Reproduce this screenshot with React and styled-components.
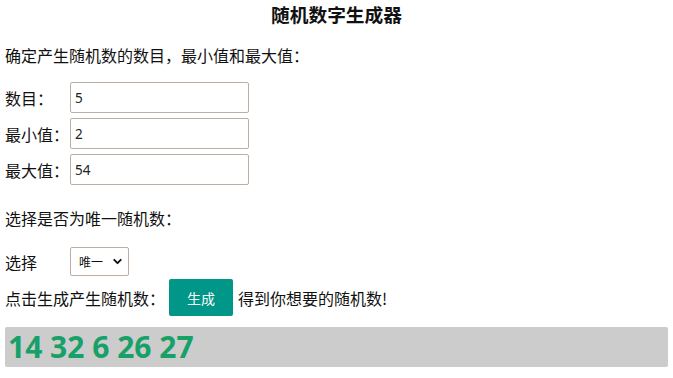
import React from "react";
import styled, { createGlobalStyle } from "styled-components";
import { ChevronDown } from "lucide-react";

const GlobalStyle = createGlobalStyle`
  body {
    margin: 0 5px;
    background: #fff;
    color: #111;
    font-family: "Noto Sans CJK SC", "Noto Sans", sans-serif;
    font-size: 16px;
  }
`;

const Page = styled.div`
  display: flex;
  flex-direction: column;
`;

const Title = styled.h3`
  margin: 0;
  height: 28px;
  line-height: 28px;
  font-size: 18.7px;
  font-weight: bold;
  text-align: center;
`;

const Text = styled.p`
  margin: ${(p) => p.$top || 0}px 0 0;
  height: 20px;
  line-height: 20px;
`;

const Fields = styled.div`
  display: flex;
  flex-direction: column;
  gap: 5px;
  margin-top: 17px;
`;

const Row = styled.div`
  display: flex;
  align-items: center;
  margin-top: ${(p) => p.$top || 0}px;
  height: ${(p) => p.$h || 31}px;
`;

const Label = styled.span`
  width: 65px;
  flex-shrink: 0;
`;

const Input = styled.input`
  box-sizing: border-box;
  width: 179px;
  height: 31px;
  padding: 0 4px;
  border: 1px solid #bcaea2;
  border-radius: 2px;
  font-family: "Noto Sans", sans-serif;
  font-size: 13.5px;
  color: #222;
  outline: none;
`;

const SelectWrap = styled.div`
  position: relative;
  width: 59px;
  height: 29px;
`;

const Select = styled.select`
  appearance: none;
  box-sizing: border-box;
  width: 100%;
  height: 100%;
  padding: 0 0 0 8px;
  border: 1px solid #bcaea2;
  border-radius: 2px;
  background: #fff;
  font-family: "Noto Sans CJK SC", sans-serif;
  font-size: 12px;
  color: #111;
`;

const Chevron = styled(ChevronDown)`
  position: absolute;
  right: 5px;
  top: 8px;
  pointer-events: none;
`;

const Button = styled.button`
  width: 64px;
  height: 37px;
  margin: 0 5px 0 4px;
  border: none;
  border-radius: 2px;
  background: #009688;
  color: #fff;
  font-family: "Noto Sans CJK SC", sans-serif;
  font-size: 14px;
`;

const Result = styled.div`
  margin-top: 11px;
  height: 40px;
  line-height: 40px;
  padding-left: 3px;
  border-radius: 2px;
  background: #cccccc;
  color: #17a067;
  font-family: "Open Sans", sans-serif;
  font-size: 30px;
  font-weight: bold;
`;

export default function App() {
  return (
    <Page>
      <GlobalStyle />
      <Title>随机数字生成器</Title>
      <Text $top={17}>确定产生随机数的数目，最小值和最大值：</Text>
      <Fields>
        <Row>
          <Label>数目：</Label>
          <Input defaultValue="5" />
        </Row>
        <Row>
          <Label>最小值：</Label>
          <Input defaultValue="2" />
        </Row>
        <Row>
          <Label>最大值：</Label>
          <Input defaultValue="54" />
        </Row>
      </Fields>
      <Text $top={23}>选择是否为唯一随机数：</Text>
      <Row $top={19} $h={29}>
        <Label>选择</Label>
        <SelectWrap>
          <Select defaultValue="unique">
            <option value="unique">唯一</option>
            <option value="repeat">可重复</option>
          </Select>
          <Chevron size={13} strokeWidth={3.5} />
        </SelectWrap>
      </Row>
      <Row $top={3} $h={37}>
        <span>点击生成产生随机数：</span>
        <Button>生成</Button>
        <span>得到你想要的随机数!</span>
      </Row>
      <Result>14 32 6 26 27</Result>
    </Page>
  );
}
